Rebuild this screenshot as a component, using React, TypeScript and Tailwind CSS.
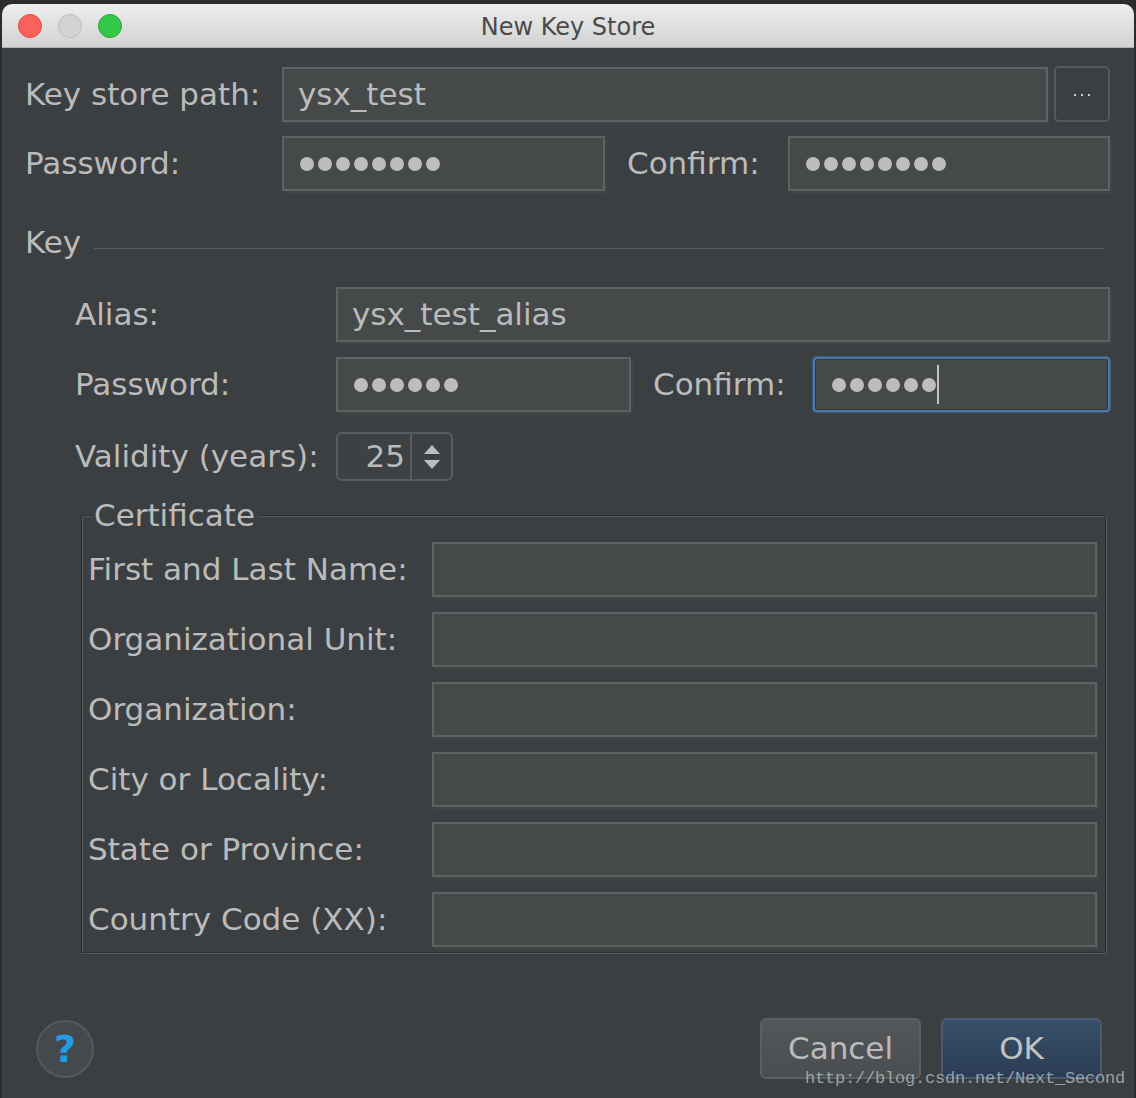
import React from "react";

const Dots = ({ n }: { n: number }) => (
  <div className="flex items-center gap-[4px]">
    {Array.from({ length: n }).map((_, i) => (
      <span key={i} className="block w-[14px] h-[14px] rounded-full bg-[#bdbdbd]" />
    ))}
  </div>
);

const Field = ({
  children,
  className = "",
  pl = "pl-[14px]",
}: {
  children?: React.ReactNode;
  className?: string;
  pl?: string;
}) => (
  <div
    className={`h-[55px] bg-[#45494a] border-2 border-[#5f6162] shadow-[2px_3px_0_#414445] flex items-center ${pl} text-[31px] leading-none text-[#bbbbbb] ${className}`}
  >
    {children}
  </div>
);

const Label = ({ children, className = "" }: { children: React.ReactNode; className?: string }) => (
  <div className={`text-[31px] leading-none text-[#bbbbbb] whitespace-nowrap ${className}`}>{children}</div>
);

export default function App() {
  const certRows = [
    "First and Last Name:",
    "Organizational Unit:",
    "Organization:",
    "City or Locality:",
    "State or Province:",
    "Country Code (XX):",
  ];
  return (
    <div className="w-[1136px] h-[1098px] bg-[#2a2c2e] pt-[4px] pl-[2px] pr-[2px] font-['DejaVu_Sans',sans-serif] overflow-hidden relative">
      <div className="h-full flex flex-col rounded-t-[10px] overflow-hidden">
        {/* Title bar */}
        <div className="h-[44px] shrink-0 bg-gradient-to-b from-[#ededed] to-[#d2d2d2] border-b border-[#b3b3b3] flex items-center relative">
          <div className="flex items-center gap-[16px] pl-[16px]">
            <span className="block w-[24px] h-[24px] rounded-full bg-[#fc605c] border border-[#de4a45]" />
            <span className="block w-[24px] h-[24px] rounded-full bg-[#d3d3d3] border border-[#bcbcbc]" />
            <span className="block w-[24px] h-[24px] rounded-full bg-[#34c84a] border border-[#2aa63c]" />
          </div>
          <div className="absolute inset-0 flex items-center justify-center pt-[3px] text-[24px] leading-none text-[#4a4a4a] pointer-events-none">
            New Key Store
          </div>
        </div>

        {/* Content */}
        <div className="flex-1 bg-[#3c3f41] pl-[23px] pr-[24px] pt-[18px] flex flex-col">
          {/* Key store path */}
          <div className="flex items-center h-[56px]">
            <Label className="w-[257px]">Key store path:</Label>
            <Field className="flex-1">ysx_test</Field>
            <div className="ml-[6px] w-[56px] h-[56px] rounded-[5px] border-2 border-[#56595b] bg-[#3c3f41] flex items-center justify-center gap-[5px] pt-[2px]">
              <span className="block w-[2px] h-[2px] bg-[#c8c8c8]" />
              <span className="block w-[2px] h-[2px] bg-[#c8c8c8]" />
              <span className="block w-[2px] h-[2px] bg-[#c8c8c8]" />
            </div>
          </div>

          {/* Password row */}
          <div className="flex items-center h-[55px] mt-[14px]">
            <Label className="w-[257px]">Password:</Label>
            <Field className="w-[323px]" pl="pl-[16px]">
              <Dots n={8} />
            </Field>
            <Label className="ml-[22px] w-[161px]">Confirm:</Label>
            <Field className="flex-1" pl="pl-[16px]">
              <Dots n={8} />
            </Field>
          </div>

          {/* Key header */}
          <div className="flex items-start h-[30px] mt-[36px]">
            <Label>Key</Label>
            <div className="flex-1 h-px bg-[#5a5c5e] mt-[21px] ml-[13px] mr-[6px]" />
          </div>

          <div className="pl-[50px] flex flex-col">
            {/* Alias */}
            <div className="flex items-center h-[55px] mt-[30px]">
              <Label className="w-[261px]">Alias:</Label>
              <Field className="flex-1">ysx_test_alias</Field>
            </div>
            {/* Password */}
            <div className="flex items-center h-[55px] mt-[15px]">
              <Label className="w-[261px]">Password:</Label>
              <Field className="w-[295px]" pl="pl-[16px]">
                <Dots n={6} />
              </Field>
              <Label className="ml-[22px] w-[160px]">Confirm:</Label>
              <div className="flex-1 h-[55px] bg-[#45494a] border-2 border-[#4b77a5] rounded-[4px] shadow-[inset_0_0_0_1px_#34383a,0_0_0_1px_#3f5e80] flex items-center pl-[17px]">
                <Dots n={6} />
                <span className="block w-[2px] h-[39px] bg-[#c4c4c4] ml-[1px]" />
              </div>
            </div>
            {/* Validity */}
            <div className="flex items-center h-[49px] mt-[20px]">
              <Label className="w-[261px]">Validity (years):</Label>
              <div className="w-[117px] h-[49px] rounded-[6px] border-2 border-[#595c5e] bg-[#3e4143] flex items-stretch">
                <div className="w-[72px] flex items-center justify-end pr-[5px] text-[31px] leading-none text-[#bbbbbb]">25</div>
                <div className="w-[2px] bg-[#595c5e]" />
                <div className="flex-1 flex flex-col items-center justify-center gap-[6px]">
                  <svg width="16" height="9" viewBox="0 0 16 9">
                    <polygon points="8,0 16,9 0,9" fill="#bdbdbd" />
                  </svg>
                  <svg width="16" height="9" viewBox="0 0 16 9">
                    <polygon points="0,0 16,0 8,9" fill="#bdbdbd" />
                  </svg>
                </div>
              </div>
            </div>
          </div>

          {/* Certificate */}
          <fieldset className="ml-[56px] mr-[4px] mt-[19px] border border-[#2c2e30] shadow-[inset_1px_1px_0_#56595b,1px_1px_0_#56595b] pl-[6px] pr-[8px] pb-[5px]">
            <legend className="ml-[3px] px-[3px] bg-[#3c3f41] text-[31px] leading-none text-[#bbbbbb]">Certificate</legend>
            <div className="flex flex-col gap-[15px] pt-[11px]">
              {certRows.map((r) => (
                <div key={r} className="flex items-center h-[55px]">
                  <Label className="w-[344px]">{r}</Label>
                  <Field className="flex-1" />
                </div>
              ))}
            </div>
          </fieldset>

          {/* Bottom buttons */}
          <div className="flex items-center justify-between mt-[65px] pr-[8px]">
            <div className="ml-[11px] w-[58px] h-[58px] rounded-full bg-[#45494b] border-2 border-[#55585a] flex items-center justify-center">
              <span className="text-[38px] leading-none font-bold text-[#1e9de3]">?</span>
            </div>
            <div className="flex items-center gap-[20px]">
              <div className="w-[161px] h-[61px] rounded-[6px] border-2 border-[#5b5f61] bg-gradient-to-b from-[#52575a] to-[#4a4e50] flex items-center justify-center text-[31px] leading-none text-[#bbbbbb]">
                Cancel
              </div>
              <div className="w-[161px] h-[61px] rounded-[6px] border-2 border-[#4a5b70] bg-gradient-to-b from-[#375069] to-[#2b3d54] flex items-center justify-center text-[31px] leading-none text-[#c2c2c2]">
                OK
              </div>
            </div>
          </div>
        </div>
      </div>

      {/* watermark overlay */}
      <div className="absolute left-[805px] top-[1070px] font-['Liberation_Mono',monospace] text-[17px] leading-none text-[#c0c0c0]/75 whitespace-nowrap tracking-[-0.2px]">
        http://blog.csdn.net/Next_Second
      </div>
    </div>
  );
}
